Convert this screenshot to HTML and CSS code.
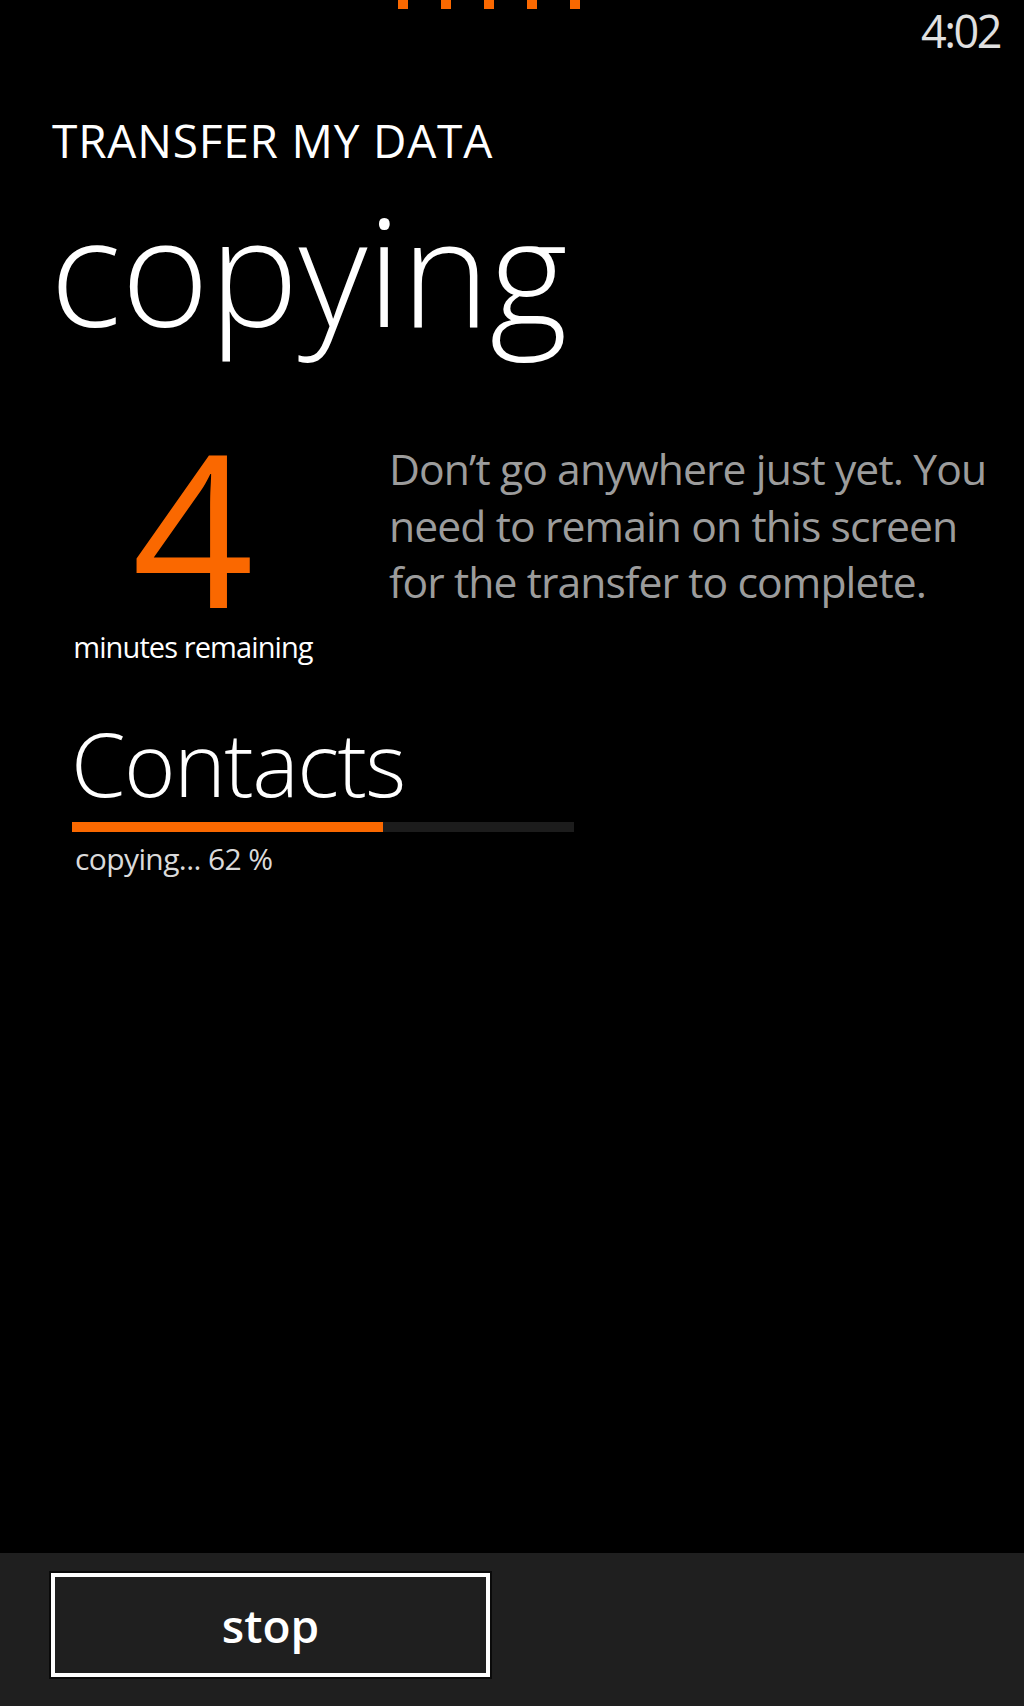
FILE: index.html
```html
<!DOCTYPE html>
<html lang="en">
<head>
<meta charset="utf-8">
<title>Transfer my data</title>
<link rel="stylesheet" href="styles.css">
</head>
<body>
<div class="screen">
  <header class="statusbar">
    <div class="dots"><span></span><span></span><span></span><span></span><span></span></div>
    <div class="clock">4:02</div>
  </header>
  <main class="content">
    <div class="app-title">TRANSFER MY DATA</div>
    <h1 class="page-title">copying</h1>
    <section class="estimate">
      <div class="countdown">
        <div class="minutes">4</div>
        <div class="minutes-label">minutes remaining</div>
      </div>
      <p class="notice">Don’t go anywhere just yet. You need to remain on this screen for the transfer to complete.</p>
    </section>
    <section class="item">
      <div class="item-name">Contacts</div>
      <div class="progress"><div class="progress-fill" style="width:62%"></div></div>
      <div class="item-status">copying... 62 %</div>
    </section>
  </main>
  <footer class="appbar">
    <button class="btn" type="button">stop</button>
  </footer>
</div>
</body>
</html>
```

FILE: styles.css
```css
* { box-sizing: border-box; }
html, body {
  margin: 0;
  padding: 0;
  background: #000;
}
body {
  font-family: "Open Sans", "Noto Sans", "DejaVu Sans", sans-serif;
  color: #fff;
}
.screen {
  width: 1024px;
  height: 1706px;
  display: flex;
  flex-direction: column;
  background: #000;
  overflow: hidden;
}
.statusbar {
  height: 68px;
  display: flex;
  justify-content: space-between;
  align-items: flex-start;
}
.dots {
  display: flex;
  gap: 33px;
  margin-left: 398px;
}
.dots span {
  display: block;
  width: 10px;
  height: 9px;
  background: #fa6800;
}
.clock {
  font-size: 45px;
  line-height: 62px;
  letter-spacing: -2.5px;
  color: #e0e0e0;
  padding-right: 24px;
}
.content {
  flex: 1;
  padding-left: 52px;
}
.app-title {
  margin-top: 44px;
  font-size: 46px;
  line-height: 56px;
  letter-spacing: 0.8px;
  color: #fff;
}
.page-title {
  margin: 21px 0 0 -2px;
  font-size: 150px;
  line-height: 160px;
  font-weight: 300;
  color: #fff;
}
.estimate {
  display: flex;
  align-items: flex-start;
  gap: 54px;
  margin-top: 76px;
  margin-left: -1px;
}
.countdown {
  width: 284px;
  display: flex;
  flex-direction: column;
  align-items: center;
}
.minutes {
  font-size: 213px;
  line-height: 200px;
  color: #fa6800;
}
.minutes-label {
  margin-top: 4px;
  font-size: 29px;
  line-height: 36px;
  letter-spacing: -0.9px;
  font-weight: 500;
  color: #fff;
}
.notice {
  margin: 16px 0 0 0;
  width: 630px;
  font-size: 42.67px;
  line-height: 56.7px;
  letter-spacing: -0.9px;
  color: #9c9c9c;
}
.item {
  margin-top: 49px;
  padding-left: 20px;
}
.item-name {
  margin: 2px 0 0 -1px;
  font-size: 88px;
  line-height: 98px;
  letter-spacing: -1.6px;
  font-weight: 300;
  color: #fff;
}
.progress {
  margin-top: 10px;
  width: 502px;
  height: 10px;
  background: #1c1c1c;
}
.progress-fill {
  height: 100%;
  background: #fa6800;
}
.item-status {
  margin: 9px 0 0 3px;
  font-size: 30px;
  line-height: 36px;
  letter-spacing: -0.6px;
  font-weight: 500;
  color: #dadada;
}
.appbar {
  height: 153px;
  background: #1f1f1f;
  padding: 20px 0 0 51px;
}
.btn {
  display: block;
  width: 439px;
  height: 104px;
  margin: 0;
  padding: 0;
  border: 4px solid #fff;
  box-shadow: 0 0 0 2px #0a0a0a;
  background: #1f1f1f;
  color: #fff;
  font-family: "Open Sans", "Noto Sans", "DejaVu Sans", sans-serif;
  font-size: 46px;
  line-height: 96px;
  font-weight: 600;
  text-align: center;
}
```
